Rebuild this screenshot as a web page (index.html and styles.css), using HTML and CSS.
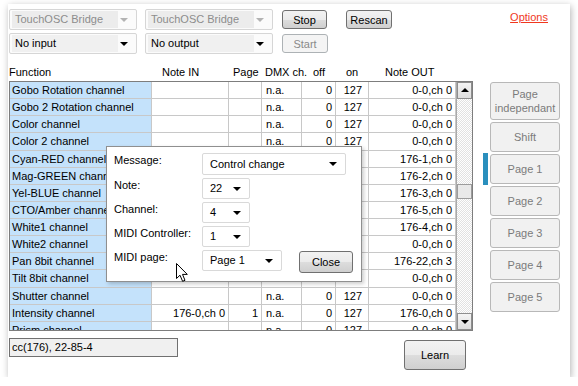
FILE: index.html
```html
<!DOCTYPE html>
<html lang="en">
<head>
    <meta charset="UTF-8">
    <title>TouchOSC Bridge</title>
    <link rel="stylesheet" href="styles.css">
</head>
<body>
    <div class="window">
        <div class="toolbar">
            <div class="tool-row">
                <div class="combo wide disabled"><span class="val">TouchOSC Bridge</span><i class="arrow"></i></div>
                <div class="combo wide disabled"><span class="val">TouchOSC Bridge</span><i class="arrow"></i></div>
                <button class="btn btn-stop">Stop</button>
                <button class="btn btn-rescan">Rescan</button>
                <a class="options" href="#">Options</a>
            </div>
            <div class="tool-row">
                <div class="combo wide"><span class="val">No input</span><i class="arrow"></i></div>
                <div class="combo wide"><span class="val">No output</span><i class="arrow"></i></div>
                <button class="btn btn-start" disabled>Start</button>
            </div>
        </div>

        <div class="colhead">
            <span>Function</span>
            <span class="h-notein">Note IN</span>
            <span class="h-page">Page</span>
            <span class="h-dmx">DMX ch.</span>
            <span class="h-off">off</span>
            <span class="h-on">on</span>
            <span class="h-noteout">Note OUT</span>
        </div>

        <div class="main">
            <div class="grid">
                <div class="rows" id="rows"></div>
                <div class="vscroll">
                    <div class="sb-btn"><i class="tri-up"></i></div>
                    <div class="sb-track">
                        <div class="sb-thumb"></div>
                    </div>
                    <div class="sb-btn"><i class="tri-down"></i></div>
                </div>
            </div>
            <div class="pages">
                <div class="page-row"><span class="mark"></span><button class="pbtn tall">Page<br>independant</button></div>
                <div class="page-row"><span class="mark"></span><button class="pbtn">Shift</button></div>
                <div class="page-row"><span class="mark on"></span><button class="pbtn">Page 1</button></div>
                <div class="page-row"><span class="mark"></span><button class="pbtn">Page 2</button></div>
                <div class="page-row"><span class="mark"></span><button class="pbtn">Page 3</button></div>
                <div class="page-row"><span class="mark"></span><button class="pbtn">Page 4</button></div>
                <div class="page-row"><span class="mark"></span><button class="pbtn">Page 5</button></div>
            </div>
        </div>

        <div class="bottom">
            <div class="status">cc(176), 22-85-4</div>
            <button class="btn btn-learn">Learn</button>
        </div>

        <div class="popup">
            <label>Message:</label>
            <div class="combo light msg"><span class="val">Control change</span><i class="arrow"></i></div>
            <label>Note:</label>
            <div class="combo light small"><span class="val">22</span><i class="arrow"></i></div>
            <label>Channel:</label>
            <div class="combo light small"><span class="val">4</span><i class="arrow"></i></div>
            <label>MIDI Controller:</label>
            <div class="combo light small"><span class="val">1</span><i class="arrow"></i></div>
            <label>MIDI page:</label>
            <div class="last-row">
                <div class="combo light mid"><span class="val">Page 1</span><i class="arrow"></i></div>
                <button class="btn btn-close">Close</button>
            </div>
        </div>

        <svg class="cursor" width="13" height="20" viewBox="0 0 13 20">
            <path d="M0.5 0.5 L0.5 15.5 L4 12.2 L6.6 18.3 L9 17.3 L6.5 11.4 L11.3 11.4 Z" fill="#fff" stroke="#000" stroke-width="1" stroke-linejoin="miter"/>
        </svg>
    </div>

    <script>
        const data = [
            ['Gobo Rotation channel', '', '', '0-0,ch 0'],
            ['Gobo 2 Rotation channel', '', '', '0-0,ch 0'],
            ['Color channel', '', '', '0-0,ch 0'],
            ['Color 2 channel', '', '', '0-0,ch 0'],
            ['Cyan-RED channel', '', '', '176-1,ch 0'],
            ['Mag-GREEN channel', '', '', '176-2,ch 0'],
            ['Yel-BLUE channel', '', '', '176-3,ch 0'],
            ['CTO/Amber channel', '', '', '176-5,ch 0'],
            ['White1 channel', '', '', '176-4,ch 0'],
            ['White2 channel', '', '', '0-0,ch 0'],
            ['Pan 8bit channel', '', '', '176-22,ch 3'],
            ['Tilt 8bit channel', '', '', '0-0,ch 0'],
            ['Shutter channel', '', '', '0-0,ch 0'],
            ['Intensity channel', '176-0,ch 0', '1', '176-0,ch 0'],
            ['Prism channel', '', '', '0-0,ch 0']
        ];
        const rows = document.getElementById('rows');
        data.forEach(d => {
            const row = document.createElement('div');
            row.className = 'row';
            row.innerHTML = `
                <span class="c func">${d[0]}</span>
                <span class="c r">${d[1]}</span>
                <span class="c r">${d[2]}</span>
                <span class="c">n.a.</span>
                <span class="c r">0</span>
                <span class="c r on">127</span>
                <span class="c r">${d[3]}</span>
            `;
            rows.appendChild(row);
        });
    </script>
</body>
</html>
```

FILE: styles.css
```css
* {
    margin: 0;
    padding: 0;
    box-sizing: border-box;
}
body {
    font-family: "Liberation Sans", Arial, sans-serif;
    font-size: 11px;
    color: #000;
    background: #fff;
}
button {
    font-family: inherit;
    font-size: 11px;
}
.window {
    position: relative;
    margin: 4px 0 0 8px;
    width: 562px;
    height: 373px;
    padding: 5px 0 0 1px;
    background: #fff;
    box-shadow: 1px 2px 7px rgba(0, 0, 0, 0.3);
}

/* toolbar */
.tool-row {
    display: flex;
    align-items: center;
    height: 21px;
}
.tool-row + .tool-row {
    margin-top: 3px;
}
.combo {
    position: relative;
    display: flex;
    align-items: center;
    flex-shrink: 0;
    height: 21px;
    border: 1px solid #d6d6d6;
    border-radius: 2px;
    background: #fbfbfb;
}
.combo .val {
    display: block;
    height: 17px;
    line-height: 17px;
    margin-left: 2px;
    padding-left: 3px;
    white-space: nowrap;
}
.combo .arrow {
    position: absolute;
    right: 8px;
    top: 8px;
    border-left: 4px solid transparent;
    border-right: 4px solid transparent;
    border-top: 4px solid #000;
}
.combo.wide {
    width: 128px;
}
.combo.wide .val {
    width: 106px;
    background: #f0f0f0;
}
.combo.wide + .combo.wide {
    margin-left: 8px;
}
.combo.disabled .val {
    color: #8d8d8d;
    background: #ececec;
}
.combo.disabled .arrow {
    border-top-color: #b3b3b3;
}
.btn {
    flex-shrink: 0;
    height: 19px;
    border: 1px solid #707070;
    border-radius: 3px;
    background: linear-gradient(#f2f2f2, #ebebeb 50%, #dddddd 51%, #cfcfcf);
    color: #000;
}
.btn-stop {
    width: 45px;
    margin-left: 9px;
}
.btn-rescan {
    width: 46px;
    margin-left: 19px;
}
.btn-start {
    width: 46px;
    margin-left: 9px;
    border-color: #adb2b5;
    background: #f4f4f4;
    color: #8a8a8a;
}
.options {
    margin: 2px 22px 0 auto;
    align-self: flex-start;
    color: #f0381e;
    text-decoration: underline;
}

/* column headers */
.colhead {
    display: grid;
    grid-template-columns: 143px 77px 33px 40px 34px 33px 87px;
    margin-top: 10px;
    height: 17px;
    line-height: 17px;
    white-space: nowrap;
}
.h-notein { padding-left: 10px; }
.h-page { padding-left: 4px; }
.h-dmx { padding-left: 3px; }
.h-off { padding-left: 11px; }
.h-on { padding-left: 10px; }
.h-noteout { padding-left: 16px; }

/* grid */
.main {
    display: flex;
    align-items: flex-start;
}
.grid {
    display: flex;
    flex-shrink: 0;
    width: 464px;
    height: 250px;
    border: 1px solid #7d7d7d;
    overflow: hidden;
}
.rows {
    width: 446px;
    flex-shrink: 0;
}
.row {
    display: grid;
    grid-template-columns: 142px 77px 33px 40px 34px 33px 87px;
    height: 17.14px;
    border-bottom: 1px solid #c8c8c8;
}
.c {
    border-right: 1px solid #c8c8c8;
    line-height: 16px;
    padding: 0 3px 0 4px;
    white-space: nowrap;
    overflow: hidden;
}
.c.r {
    text-align: right;
}
.c.on {
    padding-right: 6px;
}
.func {
    background: #c4e2fb;
    padding-left: 2px;
}
.vscroll {
    width: 16px;
    flex-shrink: 0;
    display: flex;
    flex-direction: column;
    border-left: 1px solid #a9a9a9;
}
.sb-btn {
    position: relative;
    height: 17px;
    flex-shrink: 0;
    border: 1px solid #8e8e8e;
    background: linear-gradient(#f4f4f4, #dedede);
}
.sb-track {
    flex: 1;
    background-color: #fff;
    background-image: repeating-conic-gradient(#e2e2e2 0 25%, #fff 0 50%);
    background-size: 2px 2px;
    padding-top: 85px;
}
.sb-thumb {
    height: 15px;
    border: 1px solid #9c9c9c;
    background: #e9e9e9;
}
.tri-up, .tri-down {
    position: absolute;
    left: 3px;
    border-left: 4px solid transparent;
    border-right: 4px solid transparent;
}
.tri-up {
    top: 5px;
    border-bottom: 4px solid #000;
}
.tri-down {
    top: 6px;
    border-top: 4px solid #000;
}

/* page buttons */
.pages {
    display: flex;
    flex-direction: column;
    gap: 2px;
    margin: 1px 0 0 10px;
}
.page-row {
    display: flex;
    gap: 2px;
}
.mark {
    width: 5px;
}
.mark.on {
    background: #2a8fbd;
    margin: -1px 0 -1px;
}
.pbtn {
    width: 70px;
    height: 30px;
    border: 1px solid #b8b8b8;
    border-radius: 3px;
    background: #f1f1f1;
    color: #7b7b7b;
    line-height: 14px;
}
.pbtn.tall {
    height: 38px;
}

/* bottom */
.bottom {
    display: flex;
    align-items: flex-start;
    margin-top: 7px;
}
.status {
    width: 169px;
    height: 19px;
    line-height: 17px;
    padding-left: 2px;
    border: 1px solid #707070;
    background: #f0f0f0;
}
.btn-learn {
    width: 62px;
    height: 30px;
    margin: 2px 0 0 226px;
}

/* message popup */
.popup {
    position: absolute;
    left: 98px;
    top: 142px;
    width: 256px;
    height: 136px;
    display: grid;
    grid-template-columns: 88px 1fr;
    grid-template-rows: 22px 21px 21px 21px 22px;
    row-gap: 3px;
    padding: 6px 7px;
    background: #fff;
    border: 1px solid #8f8f8f;
    box-shadow: 2px 2px 4px rgba(0, 0, 0, 0.2);
}
.popup label {
    padding-top: 1px;
    white-space: nowrap;
}
.combo.light {
    background: #fff;
    border-color: #d9d9d9;
}
.combo.light .val {
    padding-left: 5px;
}
.combo.msg { width: 144px; height: 22px; }
.combo.small { width: 48px; }
.combo.mid { width: 80px; }
.last-row {
    display: flex;
    align-items: flex-start;
}
.btn-close {
    width: 54px;
    height: 22px;
    margin: 1px 0 0 17px;
}
.cursor {
    position: absolute;
    left: 168px;
    top: 259px;
}
```
